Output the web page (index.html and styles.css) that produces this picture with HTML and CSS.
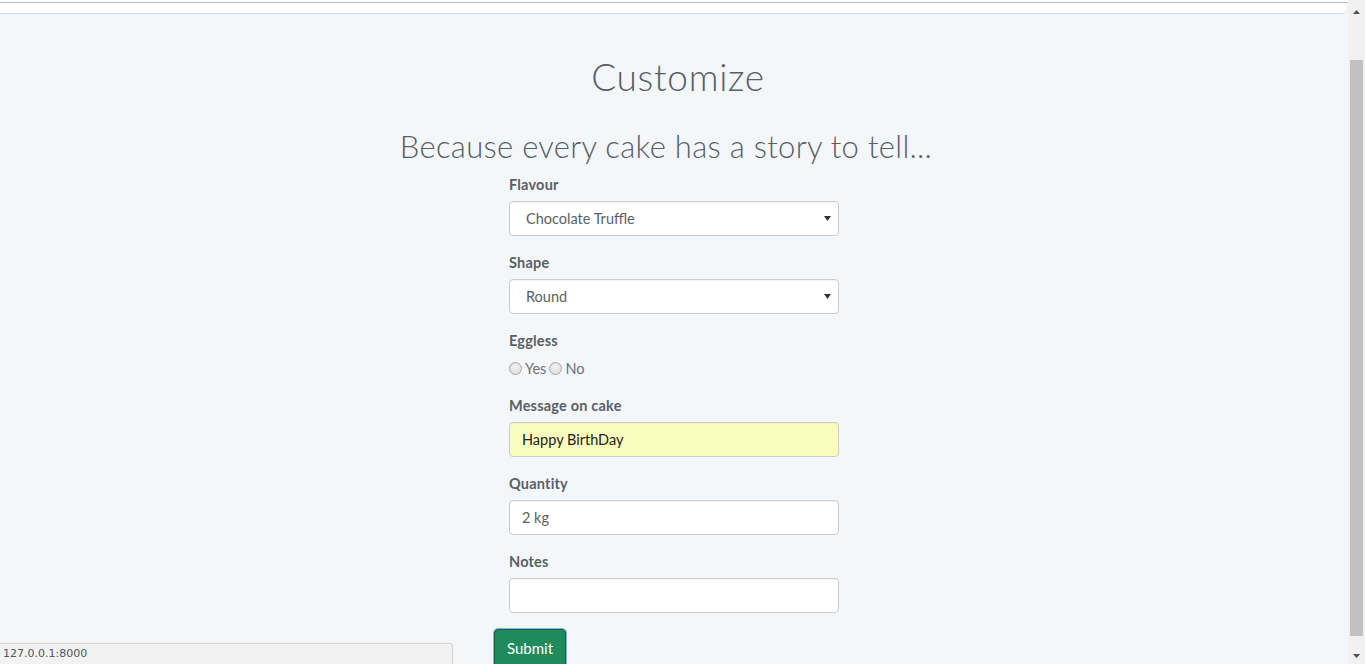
FILE: index.html
```html
<!DOCTYPE html>
<html lang="en">
<head>
<meta charset="utf-8">
<title>Customize</title>
<link rel="stylesheet" href="styles.css">
</head>
<body>
<div class="window">
  <div class="page">
    <div class="topline"></div>
    <div class="navbar"></div>
    <h1 class="title">Customize</h1>
    <h2 class="subtitle">Because every cake has a story to tell...</h2>
    <form class="order">
      <div class="fields">
        <div class="group">
          <label class="lbl">Flavour</label>
          <div class="select-wrap">
            <select class="control select"><option>Chocolate Truffle</option></select>
            <svg class="caret" width="7" height="5" viewBox="0 0 7 5"><path d="M0 0H7L3.5 5Z" fill="#333"/></svg>
          </div>
        </div>
        <div class="group">
          <label class="lbl">Shape</label>
          <div class="select-wrap">
            <select class="control select"><option>Round</option></select>
            <svg class="caret" width="7" height="5" viewBox="0 0 7 5"><path d="M0 0H7L3.5 5Z" fill="#333"/></svg>
          </div>
        </div>
        <div class="group">
          <label class="lbl">Eggless</label>
          <div class="radios">
            <input type="radio" name="egg" class="radio"><span class="rtext">Yes</span>
            <input type="radio" name="egg" class="radio"><span class="rtext">No</span>
          </div>
        </div>
        <div class="group">
          <label class="lbl">Message on cake</label>
          <input class="control autofill" type="text" value="Happy BirthDay">
        </div>
        <div class="group">
          <label class="lbl">Quantity</label>
          <input class="control" type="text" value="2 kg">
        </div>
        <div class="group last">
          <label class="lbl">Notes</label>
          <input class="control" type="text" value="">
        </div>
      </div>
      <button type="button" class="submit">Submit</button>
    </form>
    <div class="status">127.0.0.1:8000</div>
  </div>
  <div class="scrollbar">
    <div class="sb-arrow"><svg width="7" height="4" viewBox="0 0 7 4"><path d="M3.5 0L7 4H0Z" fill="#505050"/></svg></div>
    <div class="sb-track"><div class="sb-thumb"></div></div>
    <div class="sb-arrow"><svg width="7" height="4" viewBox="0 0 7 4"><path d="M0 0H7L3.5 4Z" fill="#505050"/></svg></div>
  </div>
</div>
</body>
</html>
```
FILE: styles.css
```css
* { box-sizing: border-box; }
html, body { margin: 0; padding: 0; height: 100%; overflow: hidden; }
body { font-family: "Lato", "Open Sans", sans-serif; background: #f4f7fa; color: #555; }

.window { display: flex; height: 664px; width: 1365px; }
.page { flex: 1; position: relative; overflow: hidden; background: #f4f7fa; }

.topline { height: 3px; background: #fff; border-bottom: 1px solid #b9b9b9; }
.navbar { height: 11px; background: #fff; border-bottom: 1px solid #d6dce3; border-bottom-right-radius: 4px; margin-right: 2px; }

.title { margin: 43px 0 0; padding-left: 8px; text-align: center; font-weight: 300; font-size: 37px; line-height: 40px; color: #575e66; letter-spacing: 0.7px; }
.subtitle { margin: 31px 0 0; padding-right: 16px; text-align: center; font-weight: 300; font-size: 31px; line-height: 36px; color: #575e66; letter-spacing: 0.3px; }

.order { width: 360px; margin: 11px auto 0; }
.fields { padding-left: 15px; width: 345px; }
.group { margin-bottom: 17px; }
.group.last { margin-bottom: 16px; }
.lbl { display: block; font-size: 14.5px; font-weight: 700; line-height: 20px; margin-bottom: 6px; color: #5a6067; letter-spacing: 0.2px; }

.control { display: block; width: 330px; height: 35px; border: 1px solid #cccccc; border-radius: 4px; background: #fff; font-family: "Lato", sans-serif; font-size: 14.5px; color: #5e5e5e; padding: 0 12px; outline: none; box-shadow: inset 0 1px 1px rgba(0,0,0,0.04); }
.select-wrap { position: relative; width: 330px; }
.select { appearance: none; -webkit-appearance: none; padding-left: 16px; }
.caret { position: absolute; right: 8px; top: 15px; }
.autofill { background: #fafdbd; color: #222; }

.radios { display: flex; align-items: center; height: 22px; }
.radio { appearance: none; -webkit-appearance: none; width: 13px; height: 13px; margin: 0 3px 0 0; border-radius: 50%; border: 1px solid #a8a8a8; background: radial-gradient(circle at 50% 40%, #f2f2f2, #d8d8d8); }
.rtext { font-size: 14.5px; color: #6a7078; margin-right: 3px; }

.submit { display: block; width: 72px; height: 38px; background: #1f8a5c; color: #fff; border: 1px solid #195f48; border-radius: 4px; font-family: "Lato", sans-serif; font-size: 15px; box-shadow: 0 0 0 1px #8db4e8; padding: 0; }

.status { position: absolute; left: 0; bottom: 0; width: 453px; height: 21px; background: #f2f2f2; border-top: 1px solid #d4d4d4; border-right: 1px solid #d4d4d4; border-top-right-radius: 3px; font-family: "DejaVu Sans", sans-serif; font-size: 11px; line-height: 20px; padding-left: 3px; color: #555; }

.scrollbar { width: 17px; background: #f1f1f1; display: flex; flex-direction: column; border-top: 3px solid #f1f1f1; }
.sb-arrow { height: 17px; display: flex; align-items: center; justify-content: center; }
.sb-track { flex: 1; padding: 40px 2px 11px; display: flex; }
.sb-thumb { flex: 1; background: #c1c1c1; }
```
